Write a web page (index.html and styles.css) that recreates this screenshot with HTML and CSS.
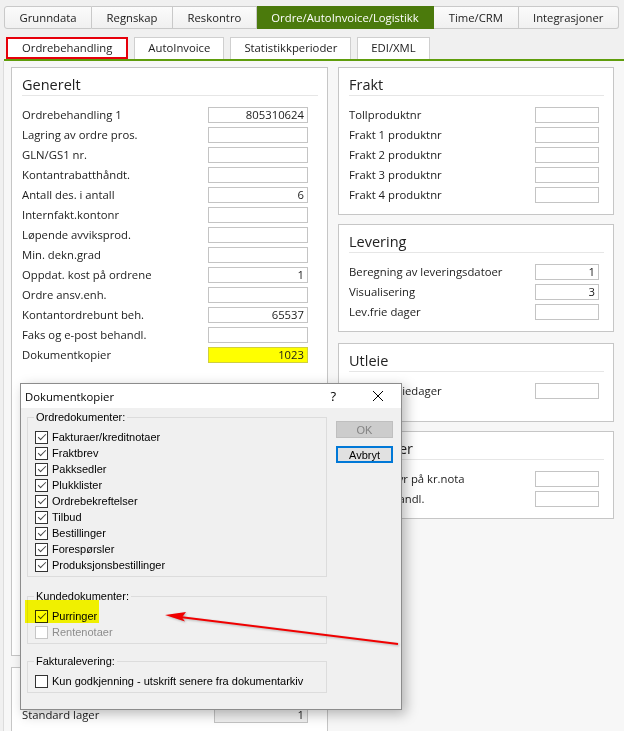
FILE: index.html
```html
<!DOCTYPE html>
<html lang="no">
<head>
    <meta charset="UTF-8">
    <title>Ordrebehandling</title>
    <link rel="stylesheet" href="styles.css">
</head>
<body>

    <div class="main-tabs">
        <div class="main-tab">Grunndata</div>
        <div class="main-tab">Regnskap</div>
        <div class="main-tab">Reskontro</div>
        <div class="main-tab active">Ordre/AutoInvoice/Logistikk</div>
        <div class="main-tab">Time/CRM</div>
        <div class="main-tab">Integrasjoner</div>
    </div>

    <div class="sub-tabs">
        <div class="sub-tab marked">Ordrebehandling</div>
        <div class="sub-tab">AutoInvoice</div>
        <div class="sub-tab">Statistikkperioder</div>
        <div class="sub-tab">EDI/XML</div>
    </div>

    <div class="content">
        <div class="column left">
            <div class="panel general">
                <div class="panel-title">Generelt</div>
                <div class="row"><span>Ordrebehandling 1</span><span class="field">805310624</span></div>
                <div class="row"><span>Lagring av ordre pros.</span><span class="field"></span></div>
                <div class="row"><span>GLN/GS1 nr.</span><span class="field"></span></div>
                <div class="row"><span>Kontantrabatthåndt.</span><span class="field"></span></div>
                <div class="row"><span>Antall des. i antall</span><span class="field">6</span></div>
                <div class="row"><span>Internfakt.kontonr</span><span class="field"></span></div>
                <div class="row"><span>Løpende avviksprod.</span><span class="field"></span></div>
                <div class="row"><span>Min. dekn.grad</span><span class="field"></span></div>
                <div class="row"><span>Oppdat. kost på ordrene</span><span class="field">1</span></div>
                <div class="row"><span>Ordre ansv.enh.</span><span class="field"></span></div>
                <div class="row"><span>Kontantordrebunt beh.</span><span class="field">65537</span></div>
                <div class="row"><span>Faks og e-post behandl.</span><span class="field"></span></div>
                <div class="row"><span>Dokumentkopier</span><span class="field marked">1023</span></div>
            </div>
            <div class="panel stock">
                <div class="panel-title">Lager</div>
                <div class="row"><span>Standard lager</span><span class="field locked">1</span></div>
            </div>
        </div>

        <div class="column right">
            <div class="panel">
                <div class="panel-title">Frakt</div>
                <div class="row"><span>Tollproduktnr</span><span class="field"></span></div>
                <div class="row"><span>Frakt 1 produktnr</span><span class="field"></span></div>
                <div class="row"><span>Frakt 2 produktnr</span><span class="field"></span></div>
                <div class="row"><span>Frakt 3 produktnr</span><span class="field"></span></div>
                <div class="row"><span>Frakt 4 produktnr</span><span class="field"></span></div>
            </div>
            <div class="panel">
                <div class="panel-title">Levering</div>
                <div class="row"><span>Beregning av leveringsdatoer</span><span class="field">1</span></div>
                <div class="row"><span>Visualisering</span><span class="field">3</span></div>
                <div class="row"><span>Lev.frie dager</span><span class="field"></span></div>
            </div>
            <div class="panel rental">
                <div class="panel-title">Utleie</div>
                <div class="row"><span>Antall utleiedager</span><span class="field"></span></div>
            </div>
            <div class="panel">
                <div class="panel-title">Purringer</div>
                <div class="row"><span>Purregebyr på kr.nota</span><span class="field"></span></div>
                <div class="row"><span>Purrebehandl.</span><span class="field"></span></div>
            </div>
        </div>
    </div>

    <!-- dialog opened over the settings page -->
    <div class="dialog">
        <div class="dialog-title">
            <span class="dialog-name">Dokumentkopier</span>
            <span class="help">?</span>
            <svg class="close" width="10" height="10" viewBox="0 0 10 10">
                <path d="M0 0L10 10M10 0L0 10" stroke="#000" stroke-width="1"/>
            </svg>
        </div>
        <div class="dialog-body">
            <div class="groups">
                <fieldset class="group">
                    <legend>Ordredokumenter:</legend>
                    <div class="check"><span class="box checked"></span>Fakturaer/kreditnotaer</div>
                    <div class="check"><span class="box checked"></span>Fraktbrev</div>
                    <div class="check"><span class="box checked"></span>Pakksedler</div>
                    <div class="check"><span class="box checked"></span>Plukklister</div>
                    <div class="check"><span class="box checked"></span>Ordrebekreftelser</div>
                    <div class="check"><span class="box checked"></span>Tilbud</div>
                    <div class="check"><span class="box checked"></span>Bestillinger</div>
                    <div class="check"><span class="box checked"></span>Forespørsler</div>
                    <div class="check"><span class="box checked"></span>Produksjonsbestillinger</div>
                </fieldset>
                <fieldset class="group">
                    <legend>Kundedokumenter:</legend>
                    <div class="check"><span class="box checked"></span>Purringer</div>
                    <div class="check disabled"><span class="box"></span>Rentenotaer</div>
                </fieldset>
                <fieldset class="group">
                    <legend>Fakturalevering:</legend>
                    <div class="check"><span class="box"></span>Kun godkjenning - utskrift senere fra dokumentarkiv</div>
                </fieldset>
            </div>
            <div class="buttons">
                <button class="btn" disabled>OK</button>
                <button class="btn default">Avbryt</button>
            </div>
        </div>
        <div class="highlight"></div>
    </div>

    <svg class="arrow" width="624" height="731" viewBox="0 0 624 731">
        <line x1="398" y1="644" x2="180" y2="617" stroke="#f00000" stroke-width="2"/>
        <polygon points="165,615 186,612 182,617.5 185,621.5" fill="#f00000"/>
    </svg>

</body>
</html>
```

FILE: styles.css
```css
* {
    box-sizing: border-box;
}

body {
    margin: 0;
    width: 624px;
    height: 731px;
    overflow: hidden;
    position: relative;
    background: #f0f0f0;
    font-family: "Open Sans", "Noto Sans", sans-serif;
    font-size: 11.3px;
    color: #1b1b1b;
}

/* top level tabs */
.main-tabs {
    display: flex;
    margin: 6px 0 0 4px;
    height: 23px;
}

.main-tab {
    padding: 0 14.5px;
    line-height: 21px;
    border: 1px solid #c9c9c9;
    border-left: none;
    background: linear-gradient(#fbfbfb, #f0f0f0);
}

.main-tab:first-child {
    border-left: 1px solid #c9c9c9;
    border-radius: 3px 0 0 3px;
}

.main-tab:last-child {
    border-radius: 0 3px 3px 0;
}

.main-tab.active {
    background: #4b7a0c;
    border-color: #4b7a0c;
    color: #fff;
}

/* second level tabs */
.sub-tabs {
    display: flex;
    gap: 6px;
    margin: 8px 0 0 4px;
    padding-left: 2px;
    height: 24px;
    border-bottom: 2px solid #5f9d0c;
}

.sub-tab {
    height: 22px;
    padding: 0 13px;
    line-height: 20px;
    border: 1px solid #cfcfcf;
    border-bottom: none;
    background: #fff;
}

.sub-tab.marked {
    border: 2px solid #e6000a;
    padding: 0 14px;
    line-height: 18px;
}

/* panels */
.content {
    display: flex;
    gap: 10px;
    height: 670px;
    margin-left: 3px;
    padding: 6px 0 0 7px;
    border-left: 1px solid #dcdcdc;
    background: #f7f7f7;
}

.column.left {
    width: 317px;
}

.column.right {
    width: 276px;
    display: flex;
    flex-direction: column;
    gap: 9px;
}

.panel {
    background: #fff;
    border: 1px solid #c6c6c6;
    padding: 6px 9px 7px 10px;
}

.panel-title {
    font-size: 14.5px;
    line-height: 21px;
    color: #222;
    border-bottom: 1px solid #e6e6e6;
    margin-bottom: 11px;
}

.row {
    display: flex;
    justify-content: space-between;
    align-items: flex-start;
    height: 20px;
    padding-right: 10px;
    line-height: 16px;
    white-space: nowrap;
}

.field {
    width: 100px;
    height: 16px;
    border: 1px solid #c4c4c4;
    background: #fff;
    text-align: right;
    padding-right: 3px;
    line-height: 14px;
}

.field.marked {
    background: #ffff00;
    border-color: #cfcf40;
}

.field.locked {
    width: 94px;
    background: #f0f0f0;
}

.general {
    height: 589px;
}

.stock {
    margin-top: 11px;
}

.right .row {
    padding-right: 5px;
}

.right .field {
    width: 64px;
}

.panel.rental {
    margin-top: 2px;
    padding-bottom: 18px;
}

/* dialog */
.dialog {
    position: absolute;
    left: 20px;
    top: 383px;
    width: 382px;
    height: 327px;
    border: 1px solid #8c8c8c;
    background: #f0f0f0;
    box-shadow: 4px 4px 12px rgba(0, 0, 0, 0.28);
}

.dialog-title {
    display: flex;
    align-items: center;
    height: 24px;
    padding-left: 4px;
    background: #fff;
    color: #000;
}

.dialog-name {
    flex: 1;
}

.help {
    font-size: 13px;
    margin-right: 37px;
}

.close {
    margin-right: 18px;
}

.dialog-body {
    display: flex;
    padding: 3px 0 0 6px;
    font-family: "Liberation Sans", Arial, sans-serif;
    font-size: 11px;
    color: #000;
}

.groups {
    width: 300px;
}

.group {
    margin: 13px 0 0;
    padding: 5px 0 3px 7px;
    border: 1px solid #dcdcdc;
}

.group:first-child {
    margin-top: 0;
}

.group:last-child {
    margin-top: 11px;
}

.group legend {
    padding: 0 2px;
    margin-left: -1px;
    line-height: 13px;
}

.check {
    display: flex;
    align-items: center;
    height: 16px;
    white-space: nowrap;
}

.box {
    position: relative;
    width: 13px;
    height: 13px;
    margin-right: 4px;
    border: 1px solid #333;
    background: #fff;
}

.box.checked::after {
    content: "";
    position: absolute;
    left: 2px;
    top: 2px;
    width: 7px;
    height: 3px;
    border-left: 1.5px solid #444;
    border-bottom: 1.5px solid #444;
    transform: rotate(-45deg);
}

.check.disabled {
    color: #8d8d8d;
}

.check.disabled .box {
    border-color: #c6c6c6;
}

.buttons {
    display: flex;
    flex-direction: column;
    gap: 8px;
    margin: 10px 0 0 9px;
}

.btn {
    width: 57px;
    height: 17px;
    padding: 0;
    font-family: "Liberation Sans", Arial, sans-serif;
    font-size: 11px;
    background: #e1e1e1;
    border: 1px solid #adadad;
    color: #000;
}

.btn:disabled {
    background: #cccccc;
    border-color: #bfbfbf;
    color: #838383;
}

.btn.default {
    border: 2px solid #0078d7;
}

/* annotations */
.highlight {
    position: absolute;
    left: 4px;
    top: 216px;
    width: 74px;
    height: 23px;
    background: #ffff00;
    mix-blend-mode: multiply;
}

.arrow {
    position: absolute;
    left: 0;
    top: 0;
    pointer-events: none;
    filter: drop-shadow(1px 1px 1px rgba(0, 0, 0, 0.25));
}
```
